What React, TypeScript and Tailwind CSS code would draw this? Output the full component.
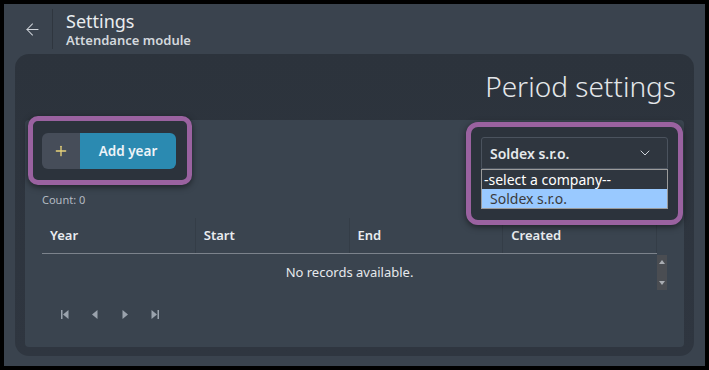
import React from "react";
import { ArrowLeft, ChevronDown, Plus } from "lucide-react";

const font = { fontFamily: '"Noto Sans", "Open Sans", sans-serif' };

const PagerIcon = ({ kind }: { kind: "first" | "prev" | "next" | "last" }) => (
  <svg width="10" height="11" viewBox="0 0 10 11" className="text-[#9aa3ad]">
    {kind === "first" && (
      <>
        <rect x="1" y="1" width="1.5" height="9" fill="currentColor" />
        <path d="M8.5 1 L3 5.5 L8.5 10 Z" fill="currentColor" />
      </>
    )}
    {kind === "prev" && <path d="M7.5 1 L2 5.5 L7.5 10 Z" fill="currentColor" />}
    {kind === "next" && <path d="M2.5 1 L8 5.5 L2.5 10 Z" fill="currentColor" />}
    {kind === "last" && (
      <>
        <path d="M1.5 1 L7 5.5 L1.5 10 Z" fill="currentColor" />
        <rect x="7.5" y="1" width="1.5" height="9" fill="currentColor" />
      </>
    )}
  </svg>
);

const columns = ["Year", "Start", "End", "Created"];

export default function App() {
  return (
    <div className="w-[709px] h-[370px] bg-black p-1" style={font}>
      <div className="flex h-full flex-col bg-[#3a434e]">
        {/* header */}
        <div className="flex h-[50px] shrink-0 items-center">
          <div className="flex h-[40px] w-[49px] items-center justify-center border-r border-[#2f363f] pl-[8px]">
            <ArrowLeft size={19} strokeWidth={1.3} className="text-[#cfd4da]" />
          </div>
          <div className="ml-[13px] flex flex-col">
            <span className="text-[18px] leading-[22px] text-[#e9ecef]">Settings</span>
            <span className="text-[13px] font-semibold leading-[17px] text-[#d3d8dd]">Attendance module</span>
          </div>
        </div>

        {/* card */}
        <div className="mx-[11px] mb-[10px] flex flex-1 flex-col rounded-[14px] bg-gradient-to-b from-[#2c333c] to-[#2f3640] px-[10px] pb-[9px]">
          <h1 className="pt-[12px] pr-[8px] text-right text-[28px] font-light leading-[40px] text-[#e4e7ea]">
            Period settings
          </h1>
          <div className="mt-[14px] flex flex-1 flex-col rounded-[4px] bg-[#3a444f] pl-[17px] pr-[17px] pt-[13px]">
            <div className="flex items-start justify-between">
              <div className="relative">
                <div className="absolute -left-[14px] -top-[17px] h-[69px] w-[164px] rounded-[10px] border-[5px] border-[#9a62a0] bg-[#2c333c] shadow-[0_2px_6px_rgba(0,0,0,0.5)]" />
                <button className="relative flex h-[36px] w-[134px] overflow-hidden rounded-[6px] text-[13.5px] font-semibold">
                  <span className="flex h-full w-[38px] items-center justify-center bg-[#464d59]">
                    <Plus size={16} strokeWidth={2} className="text-[#e8d27a]" />
                  </span>
                  <span className="flex h-full flex-1 items-center justify-center bg-[#2b8ab1] text-[#eef4f8]">
                    Add year
                  </span>
                </button>
                <div className="relative mt-[23px] text-[11px] text-[#b3bac2]">Count: 0</div>
              </div>

              <div className="relative mr-[-1px] mt-[4px]">
                <div className="absolute -left-[15px] -top-[15px] h-[103px] w-[217px] rounded-[12px] border-[5px] border-[#9a62a0] bg-[#2c333c] shadow-[0_2px_6px_rgba(0,0,0,0.5)]" />
                <div className="relative w-[187px]">
                  <div className="flex h-[32px] items-center justify-between rounded-t-[3px] border border-[#4b535e] bg-[#2f363f] pl-[8px] pr-[14px] text-[14px] font-semibold text-[#e6e9ec]">
                    <span>Soldex s.r.o.</span>
                    <ChevronDown size={16} strokeWidth={1.5} className="text-[#cfd4da]" />
                  </div>
                  <div className="border border-[#9b9b9b] text-[14px] leading-[19px]">
                    <div className="bg-[#2f363f] px-[2px] text-white">-select a company--</div>
                    <div className="bg-[#99c9ff] px-[8px] text-[#3b3b3b]">Soldex s.r.o.</div>
                  </div>
                </div>
              </div>
            </div>

            {/* table */}
            <div className="mt-[9px] flex">
              <div className="w-[615px]">
                <div className="grid h-[36px] grid-cols-4 border-b border-[#7c838c]">
                  {columns.map((c) => (
                    <div
                      key={c}
                      className="flex items-center border-r border-[#343d47] pl-[8px] text-[13px] font-semibold text-[#e9ecef]"
                    >
                      {c}
                    </div>
                  ))}
                </div>
                <div className="flex h-[38px] items-center justify-center text-[13px] text-[#e6e9ec]">
                  No records available.
                </div>
              </div>
              <div className="mt-[37px] flex h-[35px] w-[10px] flex-col items-center justify-between bg-[#4a4d52] py-[5px]">
                <svg width="6" height="4" viewBox="0 0 6 4">
                  <path d="M0 4 L3 0 L6 4 Z" fill="#a9adb2" />
                </svg>
                <svg width="6" height="4" viewBox="0 0 6 4">
                  <path d="M0 0 L3 4 L6 0 Z" fill="#a9adb2" />
                </svg>
              </div>
            </div>

            {/* pager */}
            <div className="mt-[17px] flex items-center gap-[20px] pl-[18px]">
              <PagerIcon kind="first" />
              <PagerIcon kind="prev" />
              <PagerIcon kind="next" />
              <PagerIcon kind="last" />
            </div>
          </div>
        </div>
      </div>
    </div>
  );
}
